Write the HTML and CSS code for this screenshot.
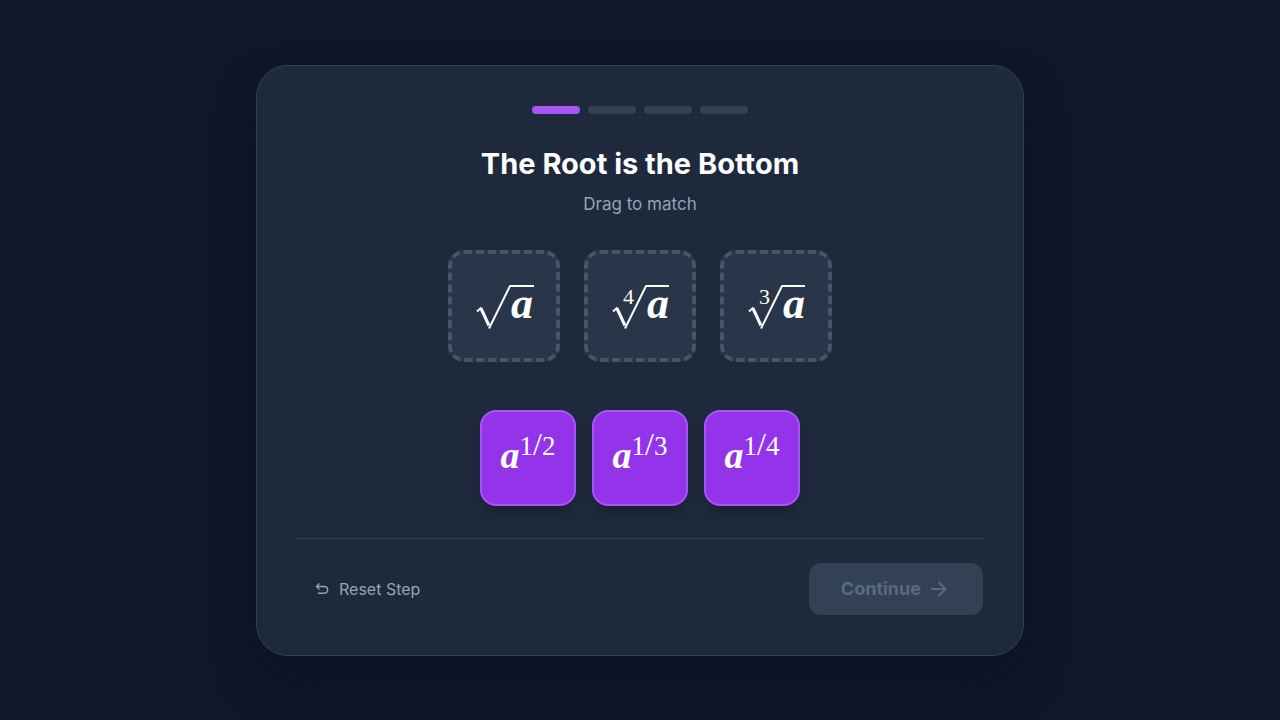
FILE: index.html
```html
<!DOCTYPE html>
<html lang="en">
  <head>
    <meta charset="utf-8">
    <title>The Root is the Bottom</title>
    <meta name="viewport" content="width=device-width, initial-scale=1">
    <link rel="stylesheet" href="styles.css">
  </head>
  <body>
    <main class="lesson">
      <div class="progress">
        <span class="step active"></span>
        <span class="step"></span>
        <span class="step"></span>
        <span class="step"></span>
      </div>
      <h1>The Root is the Bottom</h1>
      <p class="hint">Drag to match</p>

      <div class="zones">
        <div class="zone">
          <span class="root">
            <svg class="radical" viewBox="0 0 58 46" aria-hidden="true">
              <path class="thick" d="M6 25.5 14 42.5"/>
              <path class="thin" d="M2 28.5 6.5 24.5M14 45.5 35 3H59"/>
            </svg>
            <i class="radicand">a</i>
          </span>
        </div>
        <div class="zone">
          <span class="root">
            <svg class="radical" viewBox="0 0 58 46" aria-hidden="true">
              <path class="thick" d="M6 25.5 14 42.5"/>
              <path class="thin" d="M2 28.5 6.5 24.5M14 45.5 35 3H58"/>
            </svg>
            <span class="index">4</span>
            <i class="radicand">a</i>
          </span>
        </div>
        <div class="zone">
          <span class="root">
            <svg class="radical" viewBox="0 0 58 46" aria-hidden="true">
              <path class="thick" d="M6 25.5 14 42.5"/>
              <path class="thin" d="M2 28.5 6.5 24.5M14 45.5 35 3H58"/>
            </svg>
            <span class="index">3</span>
            <i class="radicand">a</i>
          </span>
        </div>
      </div>

      <div class="tiles">
        <button class="tile" type="button" draggable="true"><i>a</i><sup>1<span class="slash">/</span>2</sup></button>
        <button class="tile" type="button" draggable="true"><i>a</i><sup>1<span class="slash">/</span>3</sup></button>
        <button class="tile" type="button" draggable="true"><i>a</i><sup>1<span class="slash">/</span>4</sup></button>
      </div>

      <footer class="actions">
        <button class="reset" type="button">
          <svg width="14" height="14" viewBox="0 0 14 14" aria-hidden="true">
            <path d="M4.5 1.5 1.5 4.5 4.5 7.5M1.5 4.5H9.3A3 3 0 0 1 9.3 11.2H3"/>
          </svg>
          Reset Step
        </button>
        <button class="continue" type="button" disabled>
          Continue
          <svg width="20" height="20" viewBox="0 0 20 20" aria-hidden="true">
            <path d="M2 10H16.5M9.5 3 16.5 10 9.5 17"/>
          </svg>
        </button>
      </footer>
    </main>
  </body>
</html>
```

FILE: styles.css
```css
* {
  box-sizing: border-box;
}
body {
  display: flex;
  align-items: center;
  justify-content: center;
  min-height: 100vh;
  margin: 0;
  padding: 24px;
  background: #0f172a;
  color: #fff;
  font-family: Inter, sans-serif;
  font-variant-ligatures: none;
}
button {
  font-family: inherit;
  border: 0;
}
svg {
  fill: none;
  stroke: currentColor;
}
.lesson {
  width: 100%;
  max-width: 768px;
  padding: 40px;
  background: #1e293b;
  border: 1px solid #334155;
  border-radius: 32px;
  box-shadow: 0 25px 50px -12px rgba(13, 13, 32, 0.6);
}
.progress {
  display: flex;
  justify-content: center;
  gap: 8px;
  margin-bottom: 32px;
}
.step {
  width: 48px;
  height: 8px;
  border-radius: 4px;
  background: #334155;
}
.step.active {
  background: #a855f7;
}
h1 {
  margin: 0 0 8px;
  font-size: 29px;
  line-height: 36px;
  font-weight: 700;
  text-align: center;
}
.hint {
  margin: 0 0 32px;
  color: #94a3b8;
  font-size: 17px;
  line-height: 28px;
  text-align: center;
}
.zones {
  display: flex;
  justify-content: center;
  gap: 24px;
  margin-bottom: 48px;
}
.zone {
  display: flex;
  align-items: center;
  justify-content: center;
  width: 112px;
  height: 112px;
  border: 4px dashed #475569;
  border-radius: 16px;
  background: #293548;
}

/* radical sign with its index and radicand laid over it */
.root {
  position: relative;
  width: 58px;
  height: 46px;
  font-family: "Liberation Serif", serif;
}
.radical {
  display: block;
  width: 58px;
  height: 46px;
  overflow: visible;
}
.thick {
  stroke-width: 3;
}
.thin {
  stroke-width: 2;
}
.radicand {
  position: absolute;
  right: 0;
  bottom: 3px;
  font-size: 44px;
  line-height: 44px;
  font-weight: 700;
}
.index {
  position: absolute;
  left: 12px;
  top: 3px;
  font-size: 22px;
  line-height: 22px;
}

.tiles {
  display: flex;
  justify-content: center;
  gap: 16px;
  margin-bottom: 32px;
}
.tile {
  display: flex;
  align-items: center;
  justify-content: center;
  width: 96px;
  height: 96px;
  padding: 0 0 6px;
  border: 2px solid #a855f7;
  border-radius: 16px;
  background: #9333ea;
  color: #fff;
  box-shadow: 0 8px 12px -4px rgba(0, 0, 0, 0.3);
  font-family: "Liberation Serif", serif;
  font-size: 38px;
  line-height: 44px;
  cursor: grab;
}
.tile i {
  font-weight: 700;
}
.tile sup {
  padding-bottom: 20px;
  font-size: 27px;
  line-height: 26px;
}
.slash {
  font-size: 32px;
}

.actions {
  display: flex;
  align-items: center;
  justify-content: space-between;
  padding-top: 24px;
  border-top: 1px solid #334155;
}
.reset {
  display: flex;
  align-items: center;
  gap: 10px;
  padding: 8px 18px;
  background: none;
  color: #94a3b8;
  font-size: 16px;
  line-height: 24px;
}
.reset svg {
  stroke-width: 1.4;
}
.continue {
  display: flex;
  align-items: center;
  gap: 8px;
  padding: 12px 34px 12px 32px;
  border-radius: 12px;
  background: #334155;
  color: #596a7f;
  font-size: 18px;
  line-height: 28px;
  font-weight: 700;
}
.continue svg {
  stroke-width: 2;
}
```
